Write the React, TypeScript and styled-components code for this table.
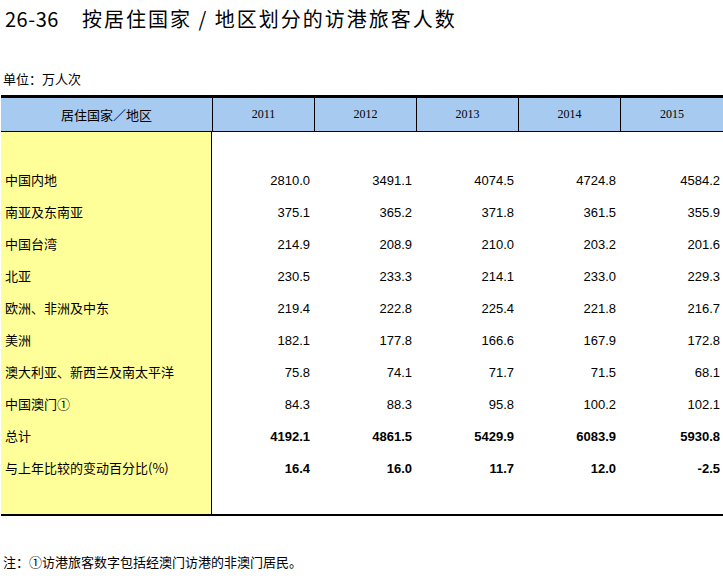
import React from "react";
import styled, { createGlobalStyle } from "styled-components";

const Global = createGlobalStyle`
  html, body { margin: 0; padding: 0; background: #fff; }
  body {
    font-family: "Noto Sans CJK SC", "Liberation Sans", sans-serif;
    color: #000;
    width: 723px;
    overflow: hidden;
  }
`;

const Page = styled.div`
  width: 723px;
  display: flex;
  flex-direction: column;
`;

const Title = styled.h1`
  margin: 0;
  height: 37px;
  display: flex;
  align-items: center;
  padding-left: 5px;
  font-family: "Noto Sans CJK SC", sans-serif;
  font-size: 20px;
  font-weight: 400;
  white-space: pre;
`;

const TitleNumber = styled.span`
  width: 77px;
  letter-spacing: 0.5px;
`;

const TitleText = styled.span`
  letter-spacing: 2px;
`;

const Unit = styled.div`
  margin-top: 31px;
  height: 27px;
  line-height: 22px;
  padding-left: 3px;
  font-size: 13px;
`;

const Table = styled.div`
  margin-left: 1px;
  width: 722px;
  border-top: 3px solid #000;
  border-bottom: 2px solid #000;
`;

const HeaderRow = styled.div`
  display: grid;
  grid-template-columns: 211px repeat(4, 102px) 1fr;
  height: 33px;
  background: #a6caf0;
  border-bottom: 1px solid #000;
`;

const HeadCell = styled.div<{ $year?: boolean }>`
  display: flex;
  align-items: center;
  justify-content: center;
  border-left: ${(p) => (p.$year ? "1px solid #000" : "none")};
  font-family: ${(p) =>
    p.$year ? `"Liberation Serif", serif` : `"Noto Sans CJK SC", sans-serif`};
  font-size: ${(p) => (p.$year ? "12px" : "13px")};
`;

const Body = styled.div`
  display: grid;
  grid-template-columns: 211px 1fr;
`;

const LabelColumn = styled.div`
  background: #ffff99;
  border-right: 1px solid #000;
  padding: 32px 0 30px;
`;

const Label = styled.div`
  height: 32px;
  line-height: 32px;
  padding-left: 4px;
  font-size: 13px;
  white-space: nowrap;
`;

const ValuesGrid = styled.div`
  display: grid;
  grid-template-columns: 101px repeat(3, 102px) 1fr;
  grid-auto-rows: 32px;
  padding: 32px 0 30px;
`;

const Value = styled.div<{ $bold?: boolean }>`
  display: flex;
  align-items: center;
  justify-content: flex-end;
  padding-right: 3px;
  font-family: "Liberation Sans", Arial, sans-serif;
  font-size: 13px;
  font-weight: ${(p) => (p.$bold ? 700 : 400)};
`;

const Note = styled.div`
  margin-top: 35px;
  height: 22px;
  line-height: 22px;
  padding-left: 3px;
  font-size: 13px;
`;

const years = ["2011", "2012", "2013", "2014", "2015"];

const rows: { label: string; values: string[]; bold?: boolean }[] = [
  { label: "中国内地", values: ["2810.0", "3491.1", "4074.5", "4724.8", "4584.2"] },
  { label: "南亚及东南亚", values: ["375.1", "365.2", "371.8", "361.5", "355.9"] },
  { label: "中国台湾", values: ["214.9", "208.9", "210.0", "203.2", "201.6"] },
  { label: "北亚", values: ["230.5", "233.3", "214.1", "233.0", "229.3"] },
  { label: "欧洲、非洲及中东", values: ["219.4", "222.8", "225.4", "221.8", "216.7"] },
  { label: "美洲", values: ["182.1", "177.8", "166.6", "167.9", "172.8"] },
  { label: "澳大利亚、新西兰及南太平洋", values: ["75.8", "74.1", "71.7", "71.5", "68.1"] },
  { label: "中国澳门①", values: ["84.3", "88.3", "95.8", "100.2", "102.1"] },
  { label: "总计", values: ["4192.1", "4861.5", "5429.9", "6083.9", "5930.8"], bold: true },
  { label: "与上年比较的变动百分比(%)", values: ["16.4", "16.0", "11.7", "12.0", "-2.5"], bold: true },
];

export default function App() {
  return (
    <Page>
      <Global />
      <Title>
        <TitleNumber>26-36</TitleNumber>
        <TitleText>按居住国家 / 地区划分的访港旅客人数</TitleText>
      </Title>
      <Unit>单位：万人次</Unit>
      <Table>
        <HeaderRow>
          <HeadCell>居住国家／地区</HeadCell>
          {years.map((y) => (
            <HeadCell key={y} $year>
              {y}
            </HeadCell>
          ))}
        </HeaderRow>
        <Body>
          <LabelColumn>
            {rows.map((r) => (
              <Label key={r.label}>{r.label}</Label>
            ))}
          </LabelColumn>
          <ValuesGrid>
            {rows.map((r) =>
              r.values.map((v, i) => (
                <Value key={r.label + i} $bold={r.bold}>
                  {v}
                </Value>
              ))
            )}
          </ValuesGrid>
        </Body>
      </Table>
      <Note>注：①访港旅客数字包括经澳门访港的非澳门居民。</Note>
    </Page>
  );
}
